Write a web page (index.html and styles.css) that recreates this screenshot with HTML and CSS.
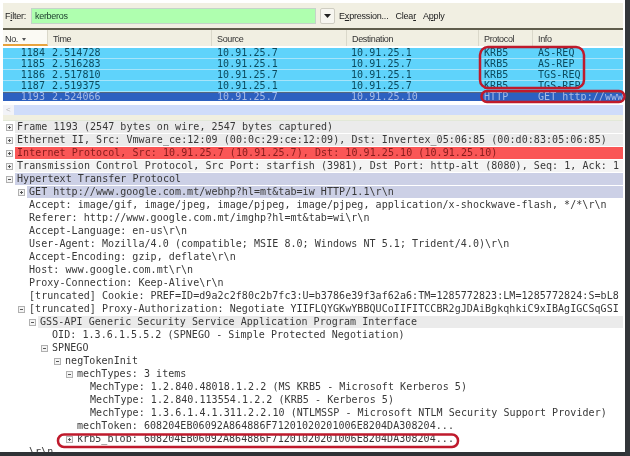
FILE: index.html
```html
<!DOCTYPE html>
<html lang="en">
<head>
<meta charset="utf-8">
<title>Wireshark kerberos capture</title>
<link rel="stylesheet" href="styles.css">
</head>
<body>
<div class="shot">
  <div class="window">
    <div class="pane">
      <div class="filterbar">
        <span class="flabel">F<u>i</u>lter:</span>
        <div class="finput">kerberos</div>
        <div class="fdrop"><svg width="7" height="4" viewBox="0 0 7 4"><path d="M0 0h7L3.500 4z" fill="#222"/></svg></div>
        <span class="fbtn fexpr">E<u>x</u>pression...</span>
        <span class="fbtn fclear">Clea<u>r</u></span>
        <span class="fbtn fapply">A<u>p</u>ply</span>
      </div>
      <div class="rule"></div>
      <div class="cols">
        <div class="col sorted">No. <svg class="sort" width="4" height="3" viewBox="0 0 4 3"><path d="M0 0h4L2 3z" fill="#555"/></svg></div>
        <div class="col">Time</div>
        <div class="col">Source</div>
        <div class="col">Destination</div>
        <div class="col">Protocol</div>
        <div class="col last">Info</div>
      </div>
      <div class="packets">
        <div class="pkt"><span class="num">1184</span><span>2.514728</span><span>10.91.25.7</span><span>10.91.25.1</span><span>KRB5</span><span>AS-REQ</span></div>
        <div class="pkt"><span class="num">1185</span><span>2.516283</span><span>10.91.25.1</span><span>10.91.25.7</span><span>KRB5</span><span>AS-REP</span></div>
        <div class="pkt"><span class="num">1186</span><span>2.517810</span><span>10.91.25.7</span><span>10.91.25.1</span><span>KRB5</span><span>TGS-REQ</span></div>
        <div class="pkt"><span class="num">1187</span><span>2.519375</span><span>10.91.25.1</span><span>10.91.25.7</span><span>KRB5</span><span>TGS-REP</span></div>
        <div class="pkt sel"><span class="num">1193</span><span>2.524066</span><span>10.91.25.7</span><span>10.91.25.10</span><span>HTTP</span><span>GET http://www</span></div>
      </div>
      <div class="hscroll"><span class="harrow">&lt;</span><div class="hthumb"></div></div>
      <div class="split"></div>
      <div class="tree">
        <div class="row shade l0"><i class="box plus"></i><span>Frame 1193 (2547 bytes on wire, 2547 bytes captured)</span></div>
        <div class="row shade l0"><i class="box plus"></i><span>Ethernet II, Src: Vmware_ce:12:09 (00:0c:29:ce:12:09), Dst: Invertex_05:06:85 (00:d0:83:05:06:85)</span></div>
        <div class="row red l0"><i class="box plus"></i><span>Internet Protocol, Src: 10.91.25.7 (10.91.25.7), Dst: 10.91.25.10 (10.91.25.10)</span></div>
        <div class="row pale l0"><i class="box plus"></i><span>Transmission Control Protocol, Src Port: starfish (3981), Dst Port: http-alt (8080), Seq: 1, Ack: 1</span></div>
        <div class="row lav l0"><i class="box minus"></i><span>Hypertext Transfer Protocol</span></div>
        <div class="row lav l1"><i class="box plus"></i><span>GET http://www.google.com.mt/webhp?hl=mt&amp;tab=iw HTTP/1.1\r\n</span></div>
        <div class="row l1"><i class="box none"></i><span>Accept: image/gif, image/jpeg, image/pjpeg, image/pjpeg, application/x-shockwave-flash, */*\r\n</span></div>
        <div class="row l1"><i class="box none"></i><span>Referer: http://www.google.com.mt/imghp?hl=mt&amp;tab=wi\r\n</span></div>
        <div class="row l1"><i class="box none"></i><span>Accept-Language: en-us\r\n</span></div>
        <div class="row l1"><i class="box none"></i><span>User-Agent: Mozilla/4.0 (compatible; MSIE 8.0; Windows NT 5.1; Trident/4.0)\r\n</span></div>
        <div class="row l1"><i class="box none"></i><span>Accept-Encoding: gzip, deflate\r\n</span></div>
        <div class="row l1"><i class="box none"></i><span>Host: www.google.com.mt\r\n</span></div>
        <div class="row l1"><i class="box none"></i><span>Proxy-Connection: Keep-Alive\r\n</span></div>
        <div class="row l1"><i class="box none"></i><span>[truncated] Cookie: PREF=ID=d9a2c2f80c2b7fc3:U=b3786e39f3af62a6:TM=1285772823:LM=1285772824:S=bL8</span></div>
        <div class="row l1"><i class="box minus"></i><span>[truncated] Proxy-Authorization: Negotiate YIIFLQYGKwYBBQUCoIIFITCCBR2gJDAiBgkqhkiC9xIBAgIGCSqGSI</span></div>
        <div class="row shade l2"><i class="box minus"></i><span>GSS-API Generic Security Service Application Program Interface</span></div>
        <div class="row l3"><i class="box none"></i><span>OID: 1.3.6.1.5.5.2 (SPNEGO - Simple Protected Negotiation)</span></div>
        <div class="row l3"><i class="box minus"></i><span>SPNEGO</span></div>
        <div class="row l4"><i class="box minus"></i><span>negTokenInit</span></div>
        <div class="row l5"><i class="box minus"></i><span>mechTypes: 3 items</span></div>
        <div class="row l6"><span>MechType: 1.2.840.48018.1.2.2 (MS KRB5 - Microsoft Kerberos 5)</span></div>
        <div class="row l6"><span>MechType: 1.2.840.113554.1.2.2 (KRB5 - Kerberos 5)</span></div>
        <div class="row l6"><span>MechType: 1.3.6.1.4.1.311.2.2.10 (NTLMSSP - Microsoft NTLM Security Support Provider)</span></div>
        <div class="row l5"><i class="box none"></i><span>mechToken: 608204EB06092A864886F71201020201006E8204DA308204...</span></div>
        <div class="row l5"><i class="box plus"></i><span>krb5_blob: 608204EB06092A864886F71201020201006E8204DA308204...</span></div>
        <div class="row l7"><span>\r\n</span></div>
      </div>
    </div>
    <div class="bottom"></div>
  </div>
  <svg class="marks" width="630" height="456" viewBox="0 0 630 456">
    <rect x="480" y="47" width="104" height="41" rx="8" />
    <rect x="481.500" y="91" width="143" height="11" rx="5.500" />
    <rect x="58" y="434.500" width="400" height="12.500" rx="6" />
  </svg>
</div>
</body>
</html>
```
FILE: styles.css
```css
* { box-sizing: border-box; }
html, body { margin: 0; padding: 0; background: #fff; }
.shot { position: relative; width: 630px; height: 456px; overflow: hidden; background: #fff; }
.window {
  width: 630px; height: 456px; display: flex; flex-direction: column;
  border-right: 5px solid #33363a; background: #fff; filter: blur(0.35px);
}
.pane { flex: 1; min-height: 0; display: flex; flex-direction: column; padding: 3px 2px 0 3px; overflow: hidden; }
.filterbar {
  height: 25px; flex: none; display: flex; align-items: center; background: #f1efe2; padding-left: 2px;
  font: 9px "Liberation Sans", sans-serif; letter-spacing: -0.2px; color: #222;
}
.flabel { width: 26px; flex: none; }
.finput {
  width: 285px; height: 16px; flex: none; background: #afffaf; border: 1px solid #c4d4c8;
  padding-left: 3px; line-height: 14px; color: #1f4030; letter-spacing: -0.3px;
}
.fdrop {
  width: 15px; height: 16px; flex: none; margin-left: 4px; background: #f7f6f0; border: 1px solid #cfcdc2; border-radius: 2px;
  display: flex; align-items: center; justify-content: center;
}
.fexpr { margin-left: 4px; }
.fclear { margin-left: 7px; }
.fapply { margin-left: 7px; }
.rule { height: 2px; flex: none; background: #5f5d4c; }
.cols {
  height: 16px; flex: none; display: grid; grid-template-columns: 45px 164px 135px 132px 54px 1fr;
  background: #f1efe2; font: 9px/18px "Liberation Sans", sans-serif; letter-spacing: -0.35px; color: #333;
}
.col { padding-left: 5px; border-right: 1px solid #dad8ca; overflow: hidden; }
.col.last { border-right: 0; }
.col.sorted { background: #fbfaf4; padding-left: 2px; border-bottom: 2px solid #e8a33c; }
.sort { margin-left: 2px; vertical-align: middle; }
.packets { flex: none; padding-top: 1.700px; }
.pkt {
  height: 11px; display: grid; grid-template-columns: 49px 165px 134px 133px 54px 1fr; background: #5fd3fb;
  border-bottom: 1px solid #a6e4fa;
  font: 10px/10px "DejaVu Sans Mono", monospace; letter-spacing: 0.06px; color: #0b4a5e; white-space: nowrap; overflow: hidden;
}
.pkt .num { text-align: right; padding-right: 7px; }
.pkt.sel { background: #2c60c0; color: #a9bce4; border-bottom: 0; height: 9px; line-height: 9px; box-shadow: inset 0 1px 0 #56677f; }
.hscroll {
  height: 10.300px; flex: none; display: flex; align-items: center; background: #f2f3f8; margin-top: 4px;
  color: #bbb; font: 8px "Liberation Sans", sans-serif;
}
.harrow { width: 11px; flex: none; padding-left: 3px; }
.hthumb { flex: 1; height: 100%; background: #cfdcfa; }
.split { height: 6px; flex: none; background: #f0efe0; border-bottom: 1px solid #e2e8d8; }
.tree {
  flex: 1; min-height: 0; overflow: hidden;
  font: 10px/12px "DejaVu Sans Mono", monospace; letter-spacing: 0.06px; color: #383838; white-space: nowrap;
}
.row { height: 13px; display: flex; align-items: flex-start; overflow: hidden; }
.row span { flex: 1; min-width: 0; height: 12px; padding-left: 2px; overflow: hidden; }
.shade span { background: #ebebeb; }
.pale span { background: #f4f4f4; }
.red span { background: #fa5656; color: #861c1c; }
.lav span { background: #ccd0e6; }
.box { display: block; flex: none; width: 7px; height: 7px; margin: 3px 2px 0 0; border: 1px solid #b0b0b0; background: #f4f4f4; position: relative; }
.box.none { border: 0; background: none; }
.box.plus::before, .box.minus::before { content: ""; position: absolute; left: 1px; right: 1px; top: 2px; height: 1px; background: #555; }
.box.plus::after { content: ""; position: absolute; top: 1px; bottom: 1px; left: 2px; width: 1px; background: #555; }
.l0 { padding-left: 3px; }
.l1 { padding-left: 15px; }
.l2 { padding-left: 26px; }
.l3 { padding-left: 38px; }
.l4 { padding-left: 51px; }
.l5 { padding-left: 63px; }
.l6 { padding-left: 85px; }
.l7 { padding-left: 24px; }
.bottom { height: 4px; flex: none; background: #2f3236; }
.marks { position: absolute; left: 0; top: 0; pointer-events: none; }
.marks rect { fill: none; stroke: #bf1a2c; stroke-width: 2.500; }
```
